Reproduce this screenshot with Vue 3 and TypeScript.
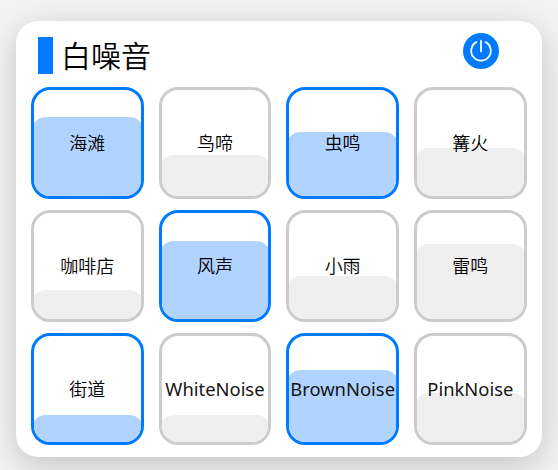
<script setup lang="ts">
interface Sound {
  name: string
  level: number
  active: boolean
}

const sounds: Sound[] = [
  { name: '海滩', level: 79.5, active: true },
  { name: '鸟啼', level: 41, active: false },
  { name: '虫鸣', level: 64, active: true },
  { name: '篝火', level: 48.5, active: false },
  { name: '咖啡店', level: 29, active: false },
  { name: '风声', level: 78.5, active: true },
  { name: '小雨', level: 43.5, active: false },
  { name: '雷鸣', level: 75, active: false },
  { name: '街道', level: 27, active: true },
  { name: 'WhiteNoise', level: 27, active: false },
  { name: 'BrownNoise', level: 72, active: true },
  { name: 'PinkNoise', level: 49, active: false },
]

const isLatin = (text: string): boolean => /^[A-Za-z]+$/.test(text)
</script>

<template>
  <div class="page">
    <main class="card">
      <header class="header">
        <span class="marker"></span>
        <h1 class="title">白噪音</h1>
        <button class="power" type="button" aria-label="Power">
          <svg viewBox="0 0 36 36" width="36" height="36" fill="none" stroke="#fff" stroke-width="1.8" stroke-linecap="round">
            <path d="M18 7.8V18.4" />
            <path d="M13.4 9.1A9.8 9.8 0 1 0 22.6 9.1" />
          </svg>
        </button>
      </header>
      <section class="grid">
        <button
          v-for="sound in sounds"
          :key="sound.name"
          class="tile"
          :class="{ active: sound.active }"
          type="button"
        >
          <span class="fill" :style="{ height: sound.level + 3 + 'px' }"></span>
          <span class="label" :class="{ latin: isLatin(sound.name) }">{{ sound.name }}</span>
        </button>
      </section>
    </main>
  </div>
</template>

<style scoped>
.page {
  box-sizing: border-box;
  height: 100vh;
  padding: 21px 0 0 16px;
  overflow: hidden;
  background: #f3f3f3;
}
.card {
  box-sizing: border-box;
  width: 525.5px;
  height: 436px;
  padding: 12px 15px 0;
  border-radius: 22px;
  background: #fff;
  box-shadow: 0 8px 32px rgba(0, 0, 0, 0.2);
  font-family: "Noto Sans", "Noto Sans CJK SC", sans-serif;
  color: #000;
}
.header {
  display: flex;
  align-items: center;
  height: 45px;
  padding: 0 27px 0 7px;
}
.marker {
  width: 15px;
  height: 37px;
  background: #007bff;
}
.title {
  margin: -3px auto 0 8px;
  font-family: "Noto Sans CJK SC", sans-serif;
  font-size: 30px;
  line-height: 44px;
  font-weight: 350;
}
.power {
  width: 36px;
  height: 36px;
  margin: -9px 1px 0 0;
  padding: 0;
  border: 0;
  border-radius: 50%;
  background: #007bff;
}
.power svg {
  display: block;
}
.grid {
  display: grid;
  grid-template-columns: repeat(4, 112.5px);
  grid-auto-rows: 112.5px;
  column-gap: 15.2px;
  row-gap: 10.5px;
  margin-top: 8.5px;
}
.tile {
  position: relative;
  box-sizing: border-box;
  display: flex;
  align-items: center;
  justify-content: center;
  padding: 0;
  border: 3px solid #ccc;
  border-radius: 19px;
  background: #fff;
  overflow: hidden;
  font: inherit;
  color: inherit;
}
.tile.active {
  border-color: #007bff;
}
.fill {
  position: absolute;
  left: -3px;
  right: -3px;
  bottom: -3px;
  border-radius: 15px;
  background: #efefef;
}
.active .fill {
  background: #b0d3ff;
}
.label {
  position: relative;
  font-size: 18px;
  line-height: 24px;
  font-weight: 350;
  white-space: nowrap;
}
.label.latin {
  font-size: 18.4px;
  font-weight: 400;
  color: #151515;
}
</style>
